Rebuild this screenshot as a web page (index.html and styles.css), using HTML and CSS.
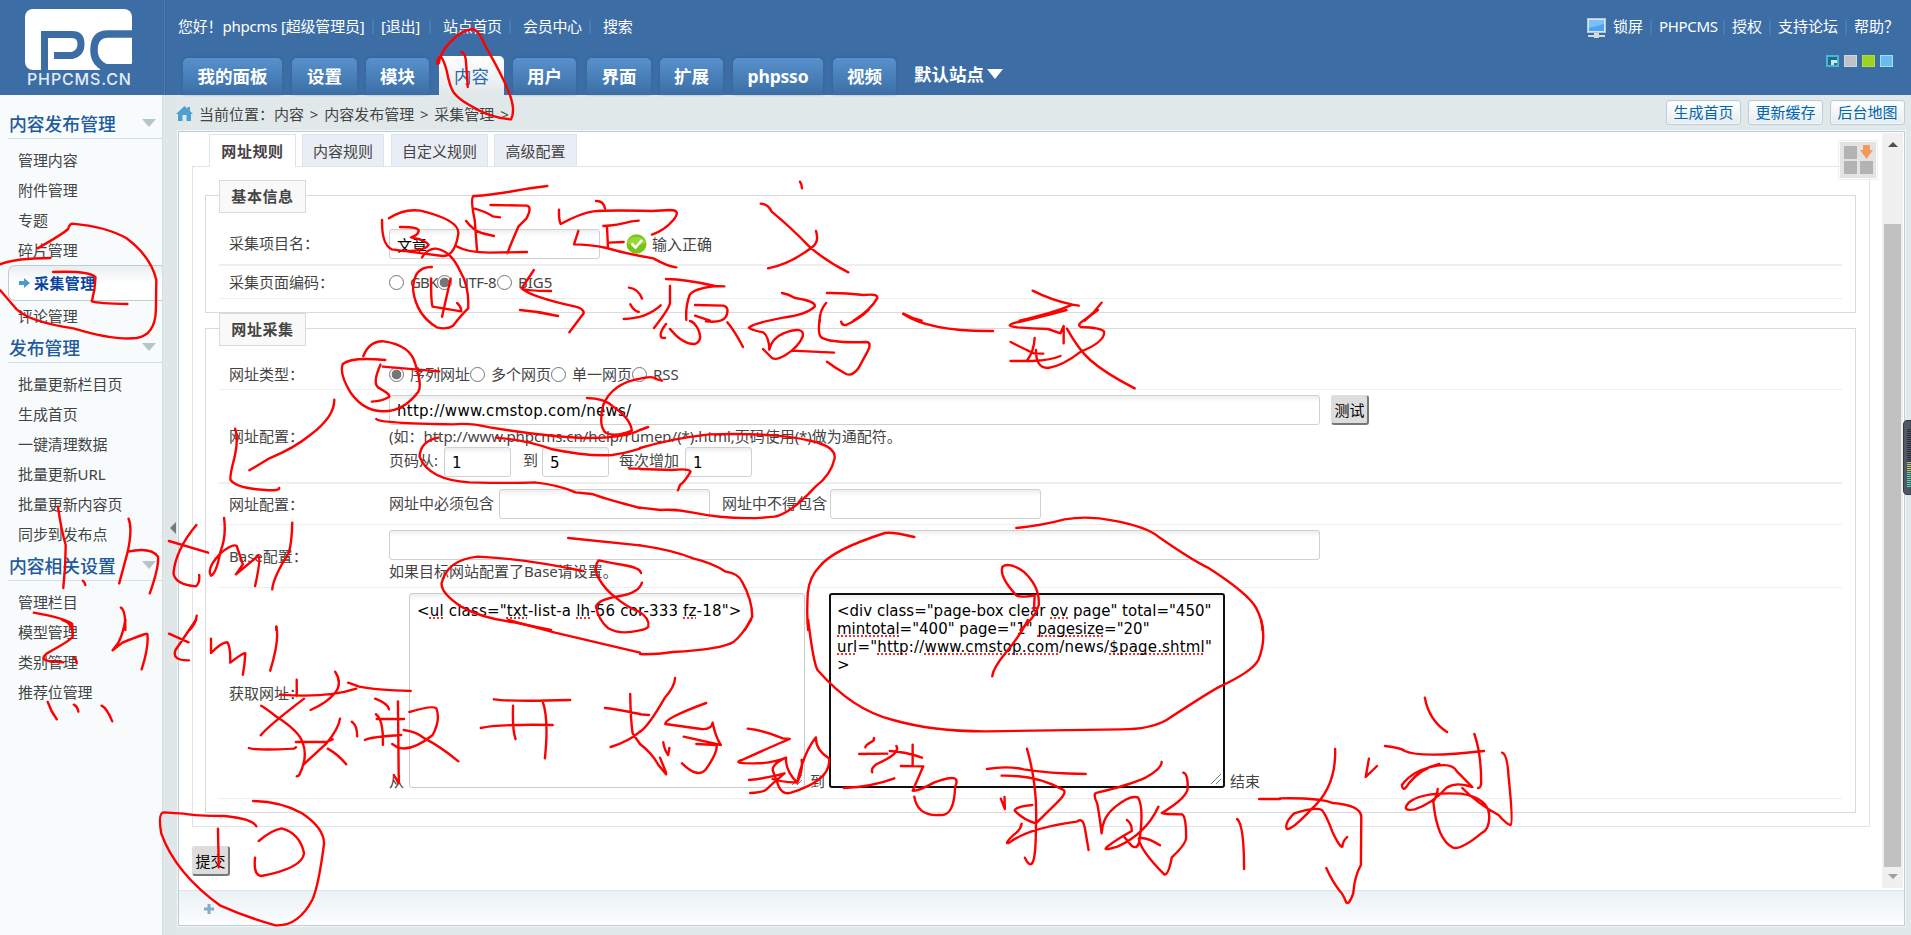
FILE: index.html
```html
<!DOCTYPE html>
<html lang="zh-CN">
<head>
<meta charset="utf-8">
<title>PHPCMS</title>
<link rel="stylesheet" href="styles.css">
</head>
<body>
<header class="header">
  <div class="logo">
    <svg width="108" height="62" viewBox="0 0 108 62">
      <rect width="107" height="61" rx="8" fill="#fff"/>
      <path d="M19.500 62V25.500H47q9 0 9 9.500t-9 11.500H29" fill="none" stroke="#3c6ea5" stroke-width="7"/>
      <path d="M108 25H83q-14 0-14 16t18 19.500" fill="none" stroke="#3c6ea5" stroke-width="7.500"/>
      <path d="M80 55H108V62H74z" fill="#3c6ea5"/>
    </svg>
    <div class="logo-text">PHPCMS.CN</div>
  </div>
  <div class="head-main">
    <div class="toplinks">
      <div class="links-left"><span class="w1">您好！phpcms [超级管理员]</span><i></i><span class="w2">[退出]</span><i></i><span class="w3">站点首页</span><i></i><span class="w3">会员中心</span><i></i><span class="w3">搜索</span></div>
      <div class="links-right">
        <svg width="19" height="20" viewBox="0 0 19 20"><rect x=".5" y=".5" width="18" height="14" fill="#d8e4ee" stroke="#b9c8d4"/><rect x="2" y="2" width="15" height="11" fill="#4aa3f3"/><path d="M2 2h15v4L2 10z" fill="#7cc0fa"/><path d="M7 15h5v2h6v2H12v1H7v-1H1v-2h6z" fill="#dadada"/></svg>
        <span class="lock">锁屏</span><i></i><span class="brand">PHPCMS</span><i></i><span>授权</span><i></i><span>支持论坛</span><i></i><span class="help">帮助？</span>
      </div>
    </div>
    <div class="navrow">
      <nav class="nav"><a class="n1">我的面板</a><a class="n2">设置</a><a>模块</a><a class="on">内容</a><a>用户</a><a class="n3">界面</a><a>扩展</a><a class="n4">phpsso</a><a>视频</a></nav>
      <div class="site">默认站点<b></b></div>
      <div class="skins"><b class="s1"></b><b class="s2"></b><b class="s3"></b><b class="s4"></b></div>
    </div>
  </div>
</header>
<div class="body">
  <aside class="side">
    <h3>内容发布管理<b></b></h3>
    <ul><li>管理内容</li><li>附件管理</li><li>专题</li><li>碎片管理</li>
      <li class="cur"><svg width="11" height="10" viewBox="0 0 11 10"><path d="M0 3h5V0l6 5-6 5V7H0z" fill="#4d9cc9"/></svg>采集管理</li><li>评论管理</li></ul>
    <h3>发布管理<b></b></h3>
    <ul><li>批量更新栏目页</li><li>生成首页</li><li>一键清理数据</li><li>批量更新URL</li><li>批量更新内容页</li><li>同步到发布点</li></ul>
    <h3>内容相关设置<b></b></h3>
    <ul><li>管理栏目</li><li>模型管理</li><li>类别管理</li><li>推荐位管理</li></ul>
  </aside>
  <div class="splitter"><b></b></div>
  <main class="main">
    <div class="crumb">
      <svg width="17" height="15" viewBox="0 0 17 15"><path d="M8.500 0l3 2.700V1H14v4l3 3h-2v7h-4.500V9h-4v6H2V8H0z" fill="#4f9fd0"/></svg>
      <span class="trail">当前位置：内容 &gt; 内容发布管理 &gt; 采集管理 &gt;</span>
      <div class="tools"><a>生成首页</a><a>更新缓存</a><a>后台地图</a></div>
    </div>
    <div class="frame">
      <div class="view">
        <div class="content">
          <div class="tabs"><a class="on">网址规则</a><a class="t2">内容规则</a><a class="t3">自定义规则</a><a class="t4">高级配置</a></div>
          <div class="panel">
            <section class="set set1">
              <h4>基本信息</h4>
              <div class="row r1"><label>采集项目名：</label><div class="line"><div class="in in-name">文章</div>
                <svg class="ok" width="22" height="20" viewBox="0 0 22 20"><ellipse cx="10.500" cy="10" rx="10" ry="9.700" fill="#76c417"/><path d="M1 9a10 9 0 0 1 19 0q-9 4-19 0" fill="#9ad935"/><path d="M5.500 9.500l4 4 6.500-7.500" fill="none" stroke="#fff" stroke-width="2.600"/></svg>
                <span>输入正确</span></div></div>
              <div class="row r2"><label>采集页面编码：</label><div class="line"><b class="radio"></b><span class="gbk">GBK</span><b class="radio sel"></b><span class="utf">UTF-8</span><b class="radio"></b><span>BIG5</span></div></div>
            </section>
            <section class="set set2">
              <h4>网址采集</h4>
              <div class="row r3"><label>网址类型：</label><div class="line"><b class="radio sel"></b><span class="c4">序列网址</span><b class="radio"></b><span class="c4">多个网页</span><b class="radio"></b><span class="c4">单一网页</span><b class="radio"></b><span>RSS</span></div></div>
              <div class="row r4"><label>网址配置：</label><div>
                <div class="line"><div class="in in-long url">http://www.cmstop.com/news/</div><button class="btn test">测试</button></div>
                <p class="tip"><span class="tip-text">(如：http://www.phpcms.cn/help/rumen/(*).html,页码使用(*)做为通配符。</span></p>
                <div class="line pages"><span class="pg1">页码从:</span><div class="in in-num">1</div><span class="pg2">到</span><div class="in in-num">5</div><span class="pg3">每次增加</span><div class="in in-num">1</div></div>
              </div></div>
              <div class="row r5"><label>网址配置：</label><div class="line"><span class="must">网址中必须包含</span><div class="in in-mid"></div><span class="not">网址中不得包含</span><div class="in in-mid"></div></div></div>
              <div class="row r6"><label>Base配置：</label><div><div class="in in-long"></div><p class="tip">如果目标网站配置了Base请设置。</p></div></div>
              <div class="row r7"><label>获取网址：</label><div class="line areas"><span class="from">从</span>
                <div class="area"><span class="a0">&lt;<u>ul</u> class="<u>txt</u>-list-a <u>lh</u>-56 cor-333 <u>fz</u>-18"&gt;</span><svg class="grip" width="12" height="12" viewBox="0 0 12 12"><path d="M1 11L11 1M6 11l5-5" stroke="#777" fill="none"/></svg></div>
                <span class="to">到</span>
                <div class="area focus"><span class="a1">&lt;div class="page-box clear <u>ov</u> page" total="450"</span><span class="a2"><u>mintotal</u>="400" page="1" <u>pagesize</u>="20"</span><span class="a3"><u>url</u>="<u>http</u>://<u>www.cmstop.com</u>/news/<u>$page.shtml</u>"</span><span>&gt;</span><svg class="grip" width="12" height="12" viewBox="0 0 12 12"><path d="M1 11L11 1M6 11l5-5" stroke="#777" fill="none"/></svg></div>
                <span class="end">结束</span></div></div>
            </section>
          </div>
          <button class="btn submit">提交</button>
        </div>
        <div class="scroll"><b class="up"></b><div class="thumb"></div><b class="down"></b></div>
        <svg class="gridicon" width="40" height="40" viewBox="0 0 40 40"><rect x=".5" y=".5" width="39" height="39" fill="#fafafa" stroke="#f1f1f1" fill-opacity=".6"/><rect x="2" y="2" width="36" height="36" fill="#dedede" fill-opacity=".85"/><g fill="#b3b3b3"><path d="M6 6h13v13H6zM6 21h13v13H6zM22 21h13v13H22z"/></g><path d="M25 5h7v5h3l-6.500 9L22 10h3z" fill="#f09a5c"/></svg>
      </div>
      <footer class="foot"><svg width="10" height="10" viewBox="0 0 10 10"><path d="M3.500 0h3v3.500H10v3H6.500V10h-3V6.500H0v-3h3.500z" fill="#82adc6"/></svg></footer>
    </div>
  </main>
</div>
<svg class="meter" width="8" height="75" viewBox="0 0 8 75"><path d="M8 .5H4Q.5.500.5 5v65q0 4.500 3.500 4.500H8z" fill="#505866" stroke="#343945"/><path d="M6 9v33" stroke="#2b2f38" stroke-width="4" stroke-dasharray="1 1"/><path d="M6 42v10" stroke="#b5cc5a" stroke-width="4" stroke-dasharray="1 1"/><path d="M6 52v15" stroke="#4fd8b4" stroke-width="4" stroke-dasharray="1 1"/></svg>
<svg class="ink" width="1911" height="935" viewBox="0 0 1911 935">
  <g transform="scale(.40816 .33333)">
    <path d="M1071 191Q1072 170 1080 171Q1086 176 1094 210Q1102 262 1112 278Q1125 298 1150 315Q1200 354 1252 358Q1264 330 1247 277Q1230 225 1190 140Q1173 90 1158 87Q1130 90 1100 130Q1078 160 1075 190M1130 156Q1141 158 1142 190L1146 261"/>
    <path d="M92 745Q150 705 167 687Q170 672 177 671Q260 680 310 715Q370 770 383 840L382 930Q380 1005 335 1014Q280 1022 180 985Q70 965 40 927L0 870M0 793Q40 774 123 774M130 816Q220 812 234 832Q233 870 225 904Q240 910 312 912"/>
    <path d="M953 655Q990 625 1030 632Q1125 660 1123 700Q1115 768 1085 768Q1000 755 960 748Q935 735 936 660M980 681Q1025 680 1026 692Q1025 706 1007 712Q1045 720 1050 735Q1040 755 985 753"/>
    <path d="M1034 772Q1048 745 1068 746Q1105 752 1128 815Q1150 860 1147 925Q1130 945 1110 977Q1095 990 1070 982Q1020 945 1012 870Q1012 800 1058 801M1056 835Q1056 910 1060 920L1130 934Q1130 920 1120 909M1104 836L1083 950"/>
    <path d="M1341 558Q1290 565 1245 576Q1180 588 1160 588Q1152 595 1163 660L1169 755M1202 615L1290 617Q1305 620 1290 655L1270 680Q1252 730 1243 760M1163 626Q1190 635 1207 649L1225 652M1142 663Q1160 692 1180 699L1210 708M1118 739Q1145 758 1200 758L1291 756M1308 810L1278 865Q1285 872 1350 873M1278 865Q1300 890 1410 920Q1430 925 1430 940L1395 997M1274 930Q1320 934 1367 948"/>
  </g>
  <g transform="translate(540 180) scale(.33333)">
    <path d="M168 63Q190 62 195 85M57 89Q56 120 62 132Q120 100 160 94Q200 90 335 93L390 90Q425 90 400 120Q375 150 336 164M115 153L102 193Q150 193 200 204Q260 222 340 235Q385 260 409 262M190 138Q230 136 275 124L296 122M201 140L204 203M206 188L251 186M780 5Q786 13 786 25M662 71Q685 73 695 95Q750 140 808 200Q860 245 925 277M828 153Q838 185 818 200Q750 253 684 265M267 323Q295 327 306 356M271 373Q280 392 296 396M251 417Q320 415 362 376M378 297Q440 298 525 318L553 319M525 318Q460 326 449 345Q436 380 439 420M390 318L390 370Q385 390 342 444M465 375L550 377Q570 382 558 410Q545 430 498 424M465 407L510 422M378 432Q355 462 365 473L375 474M390 447Q430 495 465 492Q490 482 474 447Q462 425 450 423M562 427Q585 455 609 501M726 339Q745 342 765 354Q830 364 824 380Q800 404 730 413Q640 430 627 443Q633 450 670 457Q687 470 688 509Q695 475 730 460Q795 436 788 470Q775 500 740 523Q710 543 696 534L669 507M755 512L882 518"/>
  </g>
  <g transform="translate(640 0) scale(.40816 .33333)">
    <path d="M458 879Q500 878 548 885Q585 880 581 895Q565 930 523 962M456 909Q440 930 440 965M645 941Q665 955 690 962M962 872Q1010 902 1060 914L1075 917M1060 914Q1010 940 930 962M1131 908Q1115 935 1090 962"/>
  </g>
  <g transform="translate(640 310) scale(.40816 .33333)">
    <path d="M440 30Q435 75 445 83Q470 100 555 96Q570 98 555 130L535 175Q520 200 505 192Q480 175 458 155M493 35Q495 47 505 45Q540 25 560 0M645 12Q710 65 865 63M1045 0Q960 28 920 38Q890 48 925 52Q960 55 1000 57L1030 70L1038 48V100M908 96Q935 113 965 130L988 131M967 84Q965 125 948 152M908 153L960 153Q1010 150 1030 138M970 120Q970 175 1000 174Q1035 168 1080 125Q1140 95 1137 65Q1130 53 1080 51Q1070 45 1085 33L1122 0M1046 56Q1075 120 1103 150Q1140 190 1212 235"/>
    <path d="M0 414Q80 385 170 373Q330 367 420 393Q480 410 477 445Q468 495 430 530Q370 610 330 620Q230 633 130 608Q90 597 50 600L0 593M0 477L80 480Q120 475 124 485Q110 515 98 525L93 541"/>
    <path d="M922 654Q990 645 1040 628Q1100 616 1160 632Q1240 650 1270 680Q1350 748 1390 772Q1490 850 1510 895Q1525 930 1525 960M672 681Q620 665 600 669Q470 720 440 770Q415 800 411 850Q408 920 412 960M967 856Q925 865 920 853Q880 800 888 770Q905 755 940 785Q980 830 977 885Q970 920 932 960M967 856L965 900M0 706Q80 720 130 745Q180 760 210 785Q240 790 250 815Q275 870 275 920L257 960"/>
  </g>
  <g transform="translate(0 310) scale(.40816 .33333)">
    <path d="M890 139Q905 92 940 94Q1005 105 1017 160Q1035 225 1025 245Q985 310 930 303Q890 300 860 250Q830 190 840 162Q860 140 944 150M938 170L1076 184M932 164Q910 225 930 235Q960 255 952 262Q935 274 911 275M819 269Q820 320 760 375Q720 415 660 445L611 481M576 356Q585 385 575 440Q562 500 565 510Q580 535 650 540Q685 543 684 534"/>
    <path d="M922 327Q930 340 1110 343Q1150 338 1200 352Q1330 378 1430 384Q1530 385 1568 360M1438 264Q1480 265 1500 288Q1545 325 1548 362M1568 206Q1500 220 1478 285Q1465 350 1485 369Q1510 382 1548 362M1568 206Q1600 196 1610 208L1622 212M1215 383Q1290 390 1350 417Q1440 440 1500 435Q1530 430 1568 416M1074 383Q1030 393 1028 440Q1050 510 1150 517Q1260 520 1310 517Q1370 525 1410 547L1450 552Q1490 570 1568 594M1542 476H1568M1568 360L1588 351"/>
    <path d="M142 590Q150 660 161 705Q161 770 155 834M203 812Q207 816 209 825M315 626Q325 655 313 725L292 820M313 725Q370 710 387 740Q390 770 367 850M481 645Q430 720 425 790Q430 825 480 829Q490 820 488 795M414 693L510 728M549 624Q555 680 540 725Q530 790 517 797Q505 775 540 730Q570 700 580 708L595 763L578 793L633 737Q640 745 625 828M716 638Q715 700 707 730Q670 800 667 838M83 908Q160 925 177 942V960M296 893Q308 900 307 960M482 917Q480 940 465 960M677 950V960M1392 684L1568 706M1428 783Q1280 745 1170 740Q1095 750 1082 820Q1080 850 1130 890Q1180 925 1260 937L1350 960"/>
  </g>
  <g transform="translate(530 380) scale(.33333)"><path d="M333 579Q330 563 280 555Q240 548 206 541Q190 560 203 590Q225 630 260 655Q290 680 325 694Q360 715 355 740Q350 748 325 752Q270 765 235 745Q205 720 198 680Q205 658 270 648Q325 640 336 608"/></g>
  <g transform="translate(0 620) scale(.40816 .33333)">
    <path d="M153 0Q180 8 178 50Q175 60 115 100Q95 120 125 124L155 127M181 113Q188 120 188 130M307 0Q302 40 290 68L276 91L300 68Q360 38 361 42Q365 80 347 148M480 0L430 90Q420 122 463 121M414 41L462 67M517 56V99Q545 65 557 67Q565 80 564 128Q600 95 601 100Q600 130 595 164M677 20Q685 60 662 152M117 246Q125 275 139 298M181 254Q190 260 192 275M249 257Q262 265 275 304M1245 0L1360 38L1568 98"/>
    <path d="M727 179V228M686 224Q800 235 873 206M821 155Q840 190 820 220Q800 250 761 270M640 257Q655 268 675 288Q735 335 742 370Q755 410 733 466L727 469M745 236Q655 320 639 346M610 384Q625 392 720 386L725 382M725 366H800L815 358M833 296Q830 325 800 370L745 432M803 386Q830 405 848 433M862 305Q875 315 875 349M853 188L880 200Q920 210 1006 213M919 236Q950 250 953 268M921 283Q940 300 938 375M923 297H990M975 244L977 490L965 465M894 360Q910 350 983 345M1003 276Q1060 255 1069 265Q1080 300 1060 345Q1010 395 975 383L961 372M989 330Q1020 335 1040 355Q1080 380 1123 424M1210 238Q1250 245 1397 240M1257 257Q1255 330 1263 357M1330 246Q1345 300 1335 415M1178 324Q1220 312 1354 315M1544 222Q1545 300 1550 340L1568 372M1482 264Q1500 265 1568 282M1496 381Q1540 365 1568 335"/>
    <path d="M620 543Q690 545 740 580Q800 630 793 680Q780 800 765 840Q730 920 675 916Q600 890 540 857Q430 760 395 640Q387 580 400 577L450 581Q480 588 550 588Q620 597 628 619M534 626L536 742M634 663Q665 630 690 625Q735 640 745 700Q740 745 640 768Q620 765 625 713"/>
  </g>
  <g transform="translate(640 620) scale(.40816 .33333)">
    <path d="M0 102Q30 105 80 96Q200 88 230 65Q250 45 272 0M412 0Q425 130 435 150Q520 270 620 300Q720 335 850 334L1180 328Q1250 328 1290 300Q1390 220 1420 200Q1500 155 1515 120Q1535 60 1522 0M950 0Q935 40 895 100Q865 145 863 169M86 174Q85 200 60 235Q20 320 0 335M0 283L22 285M0 372Q30 400 45 435L64 463M162 249Q60 295 62 312L150 327Q175 330 178 308Q185 350 198 375L107 350M138 372L188 375Q190 400 160 450Q140 475 103 430M57 367Q60 390 69 405L72 384M49 413L64 458M264 326Q300 330 350 355L367 357Q340 370 250 420Q225 430 270 430Q320 432 358 413Q325 430 325 450L340 500Q350 525 370 518Q470 480 463 415Q430 390 431 352Q400 400 385 488Q340 485 325 477M267 480Q310 475 354 460Q325 490 310 508Q300 518 270 519M358 413Q355 450 385 488Q400 450 396 420M573 354Q575 363 565 367Q553 375 552 382M537 402L606 401M569 457Q565 445 580 432Q640 400 628 378M612 393Q650 395 691 413M668 374V436M639 438L694 439L668 512Q680 515 720 488Q790 455 772 500Q770 590 735 585Q680 590 672 530M499 504Q570 500 623 475"/>
    <path d="M850 447Q900 437 940 448Q1000 460 1092 462M948 386Q975 500 970 620Q970 780 943 713M886 467Q970 465 1035 508Q1050 515 1020 550L970 610Q940 600 918 572Q920 560 961 555M884 536L894 567L893 531M935 611Q933 630 915 645Q890 675 905 668Q950 625 1070 605Q1085 590 1090 625L1099 690M1278 426Q1278 445 1240 472Q1200 495 1120 518Q1108 520 1120 550Q1125 580 1131 640Q1133 590 1165 560Q1200 525 1220 532Q1235 560 1224 660Q1220 690 1205 678L1186 650M1270 560Q1240 640 1170 680Q1130 695 1145 680Q1165 660 1205 633Q1205 610 1193 600M1274 676Q1240 650 1222 655Q1225 690 1285 764Q1295 765 1303 712Q1340 670 1338 650Q1338 580 1325 583Q1270 582 1280 578Q1345 530 1342 500Q1342 460 1331 458M1463 597Q1480 615 1480 747M1517 537H1568"/>
  </g>
  <g transform="translate(1280 620) scale(.40242 .33333)"><path d="M0 535Q100 533 130 549Q200 555 202 590L201 735Q185 770 182 820Q172 855 165 848Q155 820 150 815Q130 785 115 744M137 387Q140 500 80 565Q30 630 17 627Q10 610 35 580Q90 560 104 570Q115 585 130 635Q150 685 155 680Q155 665 167 651M221 416L213 471L241 438M360 233Q370 300 415 336M261 378Q300 383 310 393Q350 415 507 393M483 342Q500 400 500 490Q498 505 492 504M552 398Q565 403 568 470Q580 610 573 615Q565 615 543 585Q490 550 453 504M396 432Q350 445 320 490Q305 520 303 495Q330 450 390 437Q430 430 440 455L478 501Q440 485 415 502Q380 550 335 568Q300 575 320 548Q350 515 450 521Q520 535 520 590Q520 630 500 640Q450 690 430 683Q390 660 381 545Q390 530 392 507"/></g>
</svg>
</body>
</html>
```
FILE: styles.css
```css
* { box-sizing: border-box; margin: 0; padding: 0; }
body { width: 1911px; height: 935px; overflow: hidden; background: #e1e8ea; color: #444; font: 15px/20px "Noto Sans", "Noto Sans CJK SC", sans-serif; white-space: nowrap; }
i { font-style: normal; }
a, button { color: inherit; }
ul { list-style: none; }
.header { display: flex; height: 95px; background: #3c6ea5; color: #fff; }
.logo { width: 165px; padding: 9px 0 0 25px; border-right: 1px solid #4a7cb3; box-shadow: 1px 0 #376699; }
.logo svg { display: block; }
.logo-text { margin: -1px 0 0 2px; font: 500 16px/18px "Inter", "Noto Sans", sans-serif; color: #e3edf8; letter-spacing: .85px; }
.head-main { flex: 1; }
.toplinks { display: flex; justify-content: space-between; height: 56px; padding: 16px 12px 0 13px; }
.links-left, .links-right { display: flex; height: 20px; align-items: center; }
.toplinks i { width: 2px; height: 15px; margin: 0 12px 0 8px; background: #477bb4; }
.links-left .w1 { width: 186px; letter-spacing: -.2px; }
.links-left .w2 { width: 40px; letter-spacing: -.2px; }
.links-left i + .w2 { margin-left: -5px; }
.links-left .w3 { width: 58px; letter-spacing: -.3px; }
.links-right { padding-top: 3px; }
.links-right svg { margin-right: 7px; }
.links-right span { margin-top: -4px; }
.links-right i { margin: 0 7px; }
.brand { width: 57px; letter-spacing: -.3px; }
.help { width: 45px; }
.navrow { display: flex; height: 39px; }
.nav { display: flex; padding-left: 18px; width: 744px; }
.nav a { width: 63px; height: 37px; margin: 2px 11px 0 0; border-radius: 5px 5px 0 0; background: linear-gradient(#5791cc, #3c6ea5); box-shadow: 0 -1px 3px #33639a; font: 700 17.500px/37px "Noto Sans", "Noto Sans CJK SC", sans-serif; text-align: center; }
.nav .n1 { width: 99px; margin-right: 10px; }
.nav .n2 { width: 65px; margin-right: 9px; }
.nav .n3 { width: 64px; margin-right: 9px; }
.nav a:nth-child(3) { margin-right: 10px; }
.nav .n4 { width: 90px; margin: 2px 10px 0 -1px; letter-spacing: -.2px; }
.nav .on { width: 65px; height: 39px; margin: 0 9px 0 0; background: linear-gradient(#fff, #e1e8ea); color: #2d69ac; box-shadow: none; font-weight: 400; line-height: 41px; }
.site { padding-left: 5px; width: 130px; font: 700 17.500px/36px "Noto Sans CJK SC", sans-serif; display: flex; align-items: center; height: 36px; gap: 3px; }
.site b { border: 8px solid transparent; border-top: 10px solid #fff; border-bottom: 0; }
.skins { display: flex; gap: 5px; margin: -1px 0 0 auto; padding: 0 18px 0 0; }
.skins b { width: 13px; height: 12px; border: 1px solid #79c3dd; }
.skins .s1 { background: #1d7696; border: 2px solid #4db3d0; box-shadow: inset 3px 3px #1a6d8d, inset 6px 6px #c6e8f1; }
.skins .s2 { background: #bfc2c6; border-color: #d2d5d9; }
.skins .s3 { background: #9fd322; border-color: #b0dc40; }
.skins .s4 { background: #68bcf0; border-color: #9de0f8; }
.body { display: flex; height: 840px; }
.side { width: 163px; padding-top: 13px; background: #f7fbfc; border-right: 1px solid #d7dfe2; }
.side h3 { display: flex; align-items: center; justify-content: space-between; height: 31px; margin-left: 8px; padding: 0 6px 1px 1px; border-bottom: 1px solid #d3dfe8; color: #225a9c; font: 500 17.800px/28px "Noto Sans CJK SC", sans-serif; }
.side h3 b { border: 7px solid transparent; border-top: 8px solid #b5c5ca; border-bottom: 0; }
.side ul { padding: 6px 0 1px; }
.side li { height: 30px; padding-left: 18px; line-height: 30px; letter-spacing: -.1px; }
.side .cur { display: flex; align-items: center; gap: 4px; height: 36px; margin-left: 8px; padding-left: 10px; border: 1px solid #bdcdd6; border-right: 0; border-radius: 7px 0 0 7px; background: linear-gradient(#e9eef0, #fff 50%); color: #0a46a0; font-weight: 700; letter-spacing: .4px; }
.splitter { display: flex; align-items: center; width: 14px; padding: 25px 0 0 7px; background: #dfe7e9; }
.splitter b { border: 6px solid transparent; border-right: 6px solid #7a7a7a; border-left: 0; }
.main { flex: 1; padding-right: 6px; }
.crumb { display: flex; align-items: center; height: 36px; padding-right: 1px; }
.crumb svg { margin-left: -1px; }
.crumb .trail { margin: 1px 0 0 6px; word-spacing: 1.900px; }
.tools { display: flex; gap: 7px; margin: -1px -1px 0 auto; }
.tools a { width: 75px; height: 25px; border: 1px solid #bccfd8; border-radius: 3px; background: linear-gradient(#fff, #e6ebec); box-shadow: inset 0 0 0 1px #f4f7f8; color: #0066b0; line-height: 22px; text-align: center; }
.frame { width: 1727px; height: 795px; margin-left: 1px; border: 1px solid #bccdd5; background: #fff; outline: 1px solid #f2f6f7; }
.view { position: relative; display: flex; height: 758px; }
.content { width: 1703px; padding: 2px 12px 0 13px; }
.tabs { display: flex; height: 32px; padding-left: 17px; gap: 7px; }
.tabs a { width: 82px; height: 32px; border: 1px solid #dce3ed; border-bottom: 0; background: #e9edf5; line-height: 32px; text-align: center; }
.tabs .on { width: 87px; height: 33px; background: #fff; font-weight: 700; letter-spacing: .6px; color: #4a3f48; }
.tabs .t2 { margin-left: -1px; }
.tabs .t3 { width: 97px; }
.tabs .t4 { width: 83px; margin-left: -1px; }
.panel { height: 661px; padding: 28px 13px 0 12px; border: 1px solid #dde4ea; }
.set { border: 1px solid #dadada; padding: 0 13px; }
.set h4 { width: 87px; height: 33px; margin: -16px 0 0; border: 1px solid #dadada; background: #f9f9f9; font-size: 15px; line-height: 30px; text-align: center; letter-spacing: .6px; color: #444; }
.set1 { height: 118px; }
.set2 { height: 485px; margin-top: 15px; }
.row { display: grid; grid-template-columns: 170px 1fr; align-items: center; border-bottom: 1px solid #eee; }
.row label { padding-left: 10px; margin-top: -1px; }
.line { display: flex; align-items: center; }
.r1 { height: 53px; padding-top: 10px; border-bottom-width: 2px; }
.r2 { height: 33px; }
.r3 { height: 44px; padding-top: 13px; }
.r4 { height: 94px; border-bottom-width: 2px; }
.r5 { height: 41px; }
.r6 { height: 63px; }
.r7 { height: 211px; }
.in { height: 30px; padding: 0 7px; border: 1px solid #d0d0d0; border-radius: 3px; background: linear-gradient(#eee, #fff 6px); color: #000; line-height: 30px; }
.in-name { width: 211px; }
.in-long { width: 931px; }
.in-num { width: 67px; }
.in-mid { width: 211px; }
.ok { margin: 0 4px 0 26px; }
.radio { width: 15px; height: 15px; border: 1px solid #767676; border-radius: 50%; background: #fff; }
.radio + span { margin: -1px 0 0 6px; }
.radio.sel { background: radial-gradient(#767676 0 4.500px, #fff 5.200px); }
.gbk { width: 27px; letter-spacing: -.8px; }
.utf { width: 39px; letter-spacing: -.5px; }
.c4 { width: 60px; }
.url, .in-num, .area { font-family: "DejaVu Sans", sans-serif; }
.url { letter-spacing: .27px; }
.btn { height: 30px; border: 1px solid #ddd; border-right: 2px solid #777; border-bottom: 2px solid #777; border-radius: 3px; background: #ddd; color: #000; font: 15px/26px "Noto Sans CJK SC", sans-serif; }
.test { width: 38px; margin-left: 11px; }
.submit { display: block; width: 38px; margin-top: 19px; }
.tip { height: 22px; line-height: 23px; }
.tip-text { letter-spacing: -.03px; }
.pages { height: 30px; }
.pages span { margin-top: -5px; }
.pages .pg1 { width: 55px; }
.pg2 { width: 31px; padding-left: 12px; }
.pg3 { width: 76px; padding-left: 10px; }
.must, .not { margin-top: -3px; }
.must { width: 110px; }
.not { width: 120px; padding-left: 12px; }
.areas { align-items: flex-end; height: 195px; margin-top: -6px; }
.areas > span { height: 14px; line-height: 15px; }
.from { width: 20px; }
.to { width: 24px; padding-left: 5px; }
.end { padding-left: 5px; }
.area { position: relative; display: flex; flex-direction: column; align-items: flex-start; width: 396px; height: 195px; padding: 8px 7px; border: 1px solid #ccc; border-radius: 3px; background: linear-gradient(#eee, #fff 6px); color: #000; font-size: 15px; line-height: 18px; }
.area.focus { border: 2px solid #101010; padding: 7px 6px; }
.a0, .a3 { letter-spacing: .18px; }
.area u { text-decoration: underline dotted #e33; text-decoration-thickness: 1.500px; text-underline-offset: 2px; text-decoration-skip-ink: none; }
.grip { position: absolute; right: 1px; bottom: 1px; }
.scroll { display: flex; flex-direction: column; align-items: center; width: 21px; height: 755px; margin-top: 1px; background: #f0f0f0; }
.scroll .up { margin: 9px 0 0; border: 5px solid transparent; border-bottom: 5px solid #505050; border-top: 0; }
.scroll .thumb { width: 17px; height: 643px; margin-top: 77px; background: #c1c1c1; }
.scroll .down { margin-top: 7px; border: 5px solid transparent; border-top: 5px solid #a0a0a0; border-bottom: 0; }
.gridicon { position: absolute; left: 1659px; top: 8px; }
.foot { height: 35px; border-top: 1px solid #dde5e8; background: linear-gradient(#ebf1f5, #fcfdfe); padding: 13px 0 0 25px; }
.foot svg { display: block; }
.meter { position: absolute; left: 1903px; top: 420px; }
.ink { position: absolute; left: 0; top: 0; }
.ink path { fill: none; stroke: #fe0000; stroke-width: 2.400px; stroke-linecap: round; stroke-linejoin: round; vector-effect: non-scaling-stroke; }
```
